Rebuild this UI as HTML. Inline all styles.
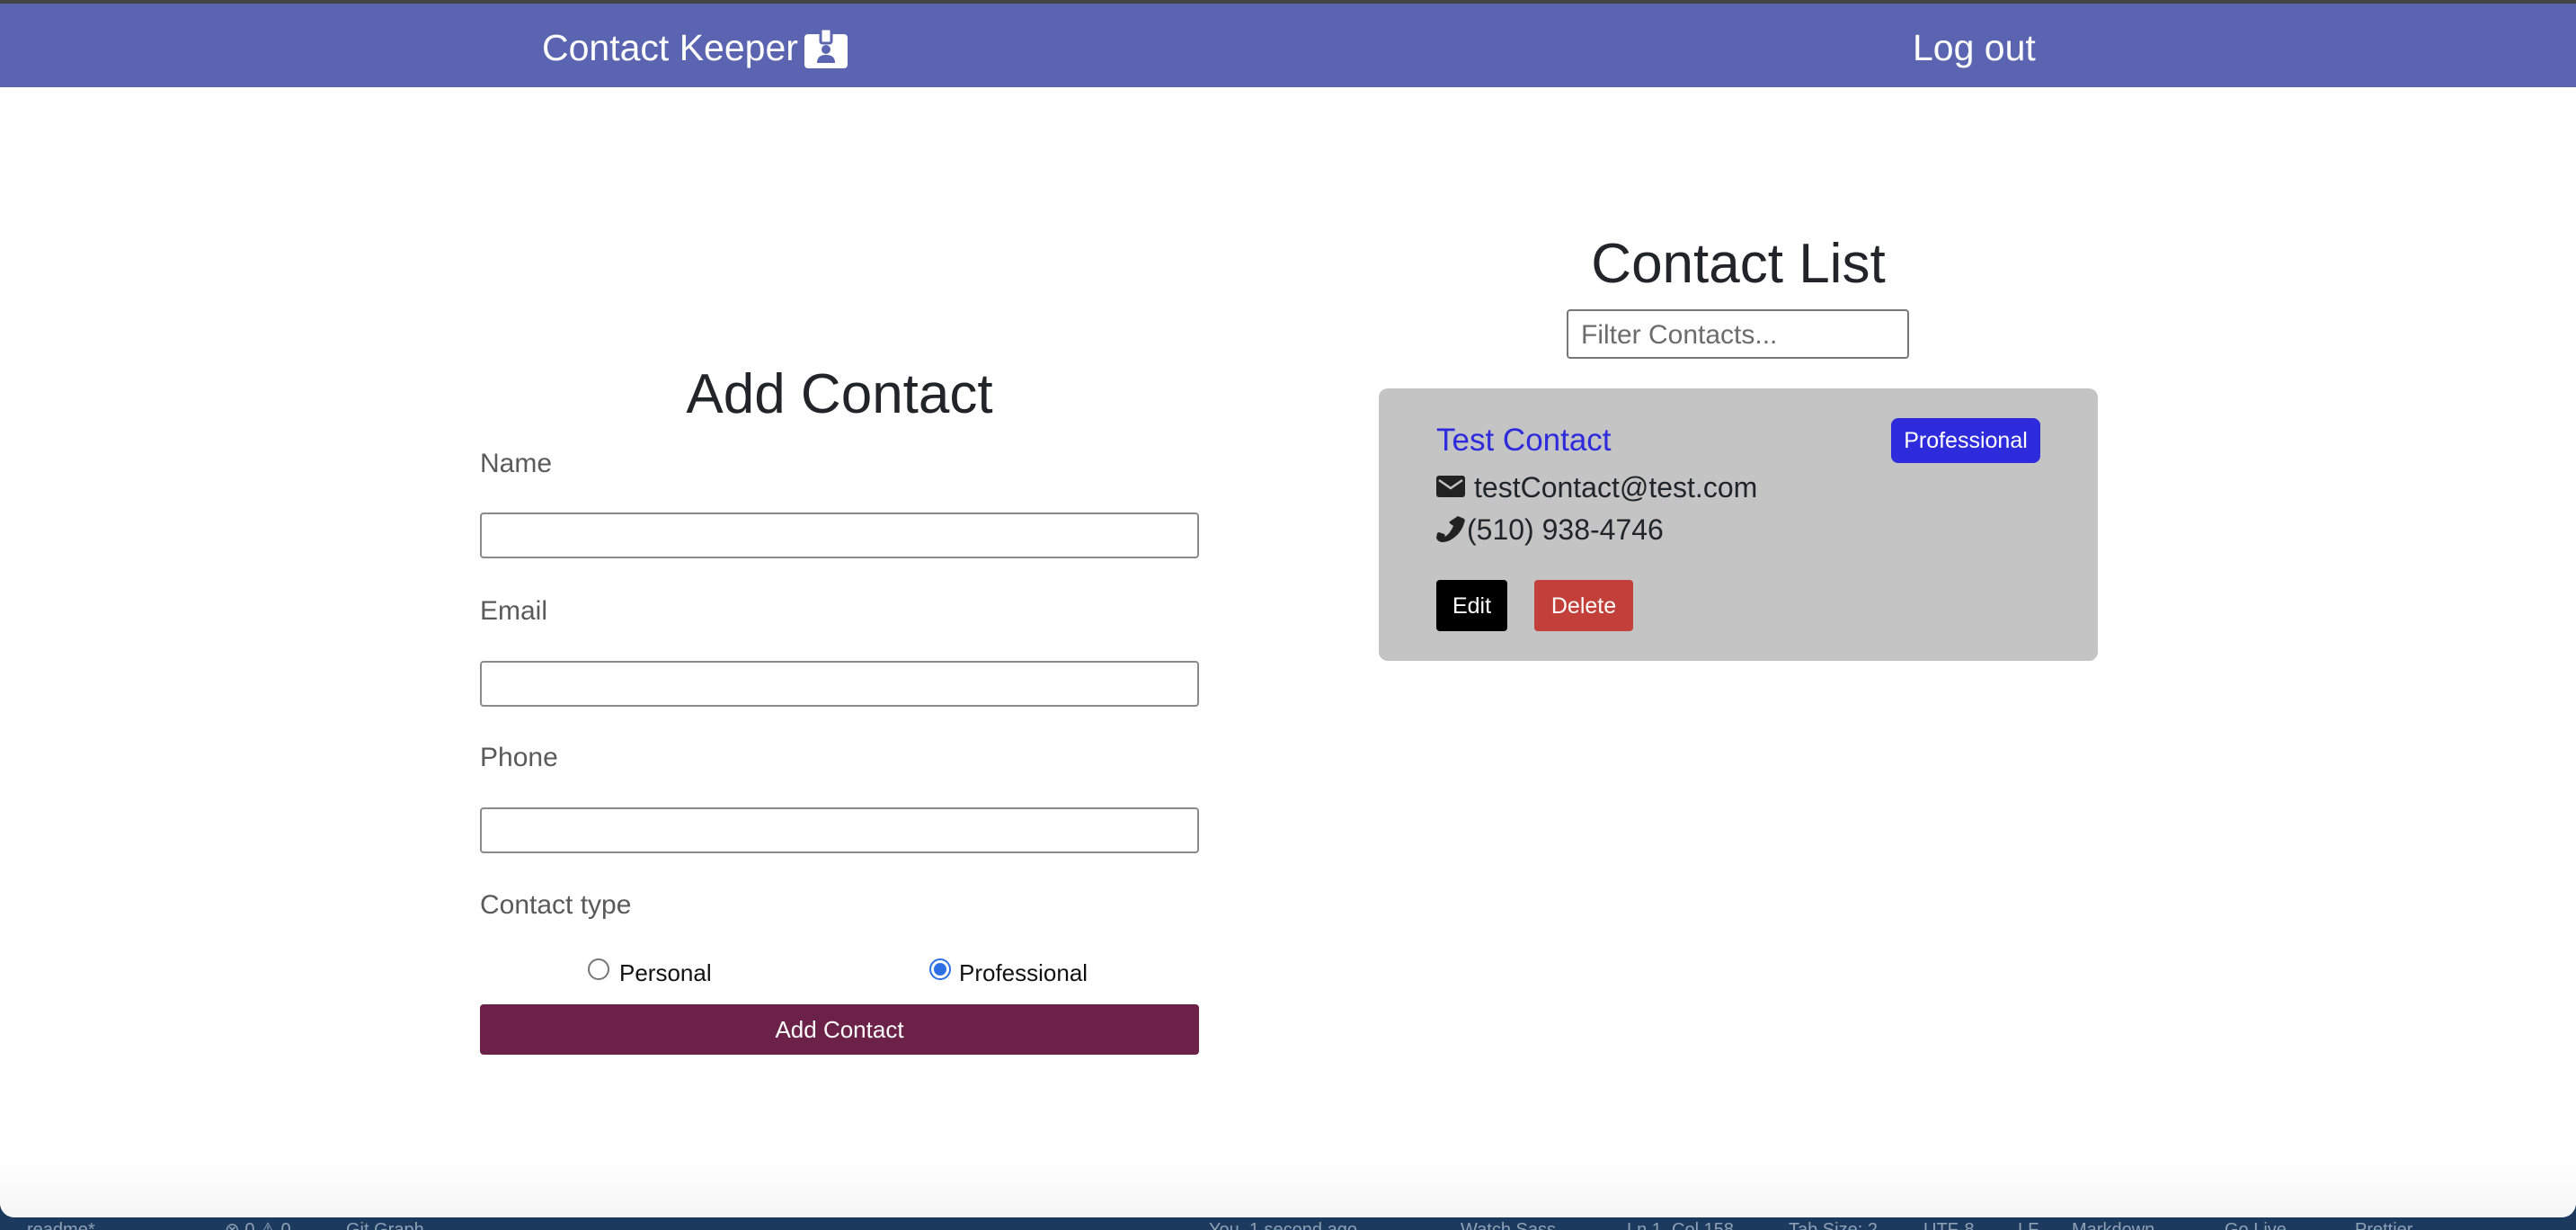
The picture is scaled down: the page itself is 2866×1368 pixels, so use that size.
<!DOCTYPE html>
<html><head><meta charset="utf-8"><style>
*{margin:0;padding:0;box-sizing:border-box}
body{width:2866px;height:1368px;overflow:hidden;background:#1b3a5e;font-family:"Liberation Sans",sans-serif;position:relative}
.win{position:absolute;left:0;top:0;width:2866px;height:1354px;background:#fff;border-radius:0 0 16px 16px;overflow:hidden}
.topline{position:absolute;left:0;top:0;width:100%;height:4px;background:#444}
.hdr{position:absolute;left:0;top:4px;width:100%;height:93px;background:#5a64b1;color:#fff}
.a{position:absolute;white-space:nowrap}
.lbl{font-size:30px;color:#5a5a5a}
.inp{position:absolute;left:534px;width:800px;height:51px;border:2px solid #8a8a8a;border-radius:4px;background:#fff}
.h{font-size:62px;color:#212529}
.radio{position:absolute;width:24px;height:24px;border-radius:50%;border:2px solid #767676;background:#fff}
</style></head><body>
<div class="win">
<div class="topline"></div>
<div class="hdr">
 <div class="a" style="left:603px;top:26px;font-size:41px">Contact Keeper</div>
 <svg class="a" style="left:895px;top:28px" width="48" height="44" viewBox="0 0 48 44">
  <rect x="0" y="6" width="48" height="38" rx="4" fill="#fff"/>
  <rect x="18" y="0" width="12" height="16" rx="2" fill="#fff" stroke="#5a64b1" stroke-width="3"/>
  <circle cx="24" cy="23" r="5" fill="#5a64b1"/>
  <path d="M14 38 q0-9 10-9 q10 0 10 9z" fill="#5a64b1"/>
 </svg>
 <div class="a" style="left:2128px;top:26px;font-size:41px">Log out</div>
</div>

<div class="a h" style="left:534px;width:800px;text-align:center;top:403px">Add Contact</div>
<div class="a lbl" style="left:534px;top:499px">Name</div>
<div class="inp" style="top:570px"></div>
<div class="a lbl" style="left:534px;top:663px">Email</div>
<div class="inp" style="top:735px"></div>
<div class="a lbl" style="left:534px;top:826px">Phone</div>
<div class="inp" style="top:898px"></div>
<div class="a lbl" style="left:534px;top:990px">Contact type</div>
<div class="radio" style="left:654px;top:1066px"></div>
<div class="a" style="left:689px;top:1067px;font-size:26px;color:#111">Personal</div>
<div class="radio" style="left:1034px;top:1066px;border-color:#2f6fe4"><div style="position:absolute;left:3px;top:3px;width:14px;height:14px;border-radius:50%;background:#2f6fe4"></div></div>
<div class="a" style="left:1067px;top:1067px;font-size:26px;color:#111">Professional</div>
<div class="a" style="left:534px;top:1117px;width:800px;height:56px;background:#6b2148;border-radius:4px;color:#fff;font-size:26px;text-align:center;line-height:56px">Add Contact</div>

<div class="a h" style="left:1534px;width:800px;text-align:center;top:258px">Contact List</div>
<div class="a" style="left:1743px;top:344px;width:381px;height:55px;border:2px solid #777;border-radius:4px;font-size:30px;color:#6c6c6c;padding-left:14px;line-height:53px">Filter Contacts...</div>

<div class="a" style="left:1534px;top:432px;width:800px;height:303px;background:#c4c4c4;border-radius:10px">
 <div class="a" style="left:64px;top:38px;font-size:35px;color:#2d2bdb">Test Contact</div>
 <div class="a" style="left:570px;top:33px;width:166px;height:50px;background:#2d2bdb;border-radius:8px;color:#fff;font-size:25px;text-align:center;line-height:51px">Professional</div>
 <svg class="a" style="left:64px;top:97px" width="32" height="24" viewBox="0 0 32 24"><rect x="0" y="0" width="32" height="24" rx="3" fill="#222"/><path d="M3 5 L16 14 L29 5" stroke="#c4c4c4" stroke-width="2.5" fill="none"/></svg>
 <div class="a" style="left:106px;top:92px;font-size:32px;color:#212529">testContact@test.com</div>
 <svg class="a" style="left:64px;top:142px" width="32" height="29" viewBox="0 0 32 29"><path d="M24 0 L31 3 Q32 4 31.5 6 Q28 20 15 27 Q11 29 6 29 Q1 28 0 24 L1 19 Q2 18 3 18 L9 20 Q10 21 9.5 23 Q15 20 19 11 L15 8 Q14 7 15 6 Z" fill="#222"/></svg>
 <div class="a" style="left:98px;top:139px;font-size:32px;color:#212529">(510) 938-4746</div>
 <div class="a" style="left:64px;top:213px;width:79px;height:57px;background:#000;border-radius:4px;color:#fff;font-size:25px;text-align:center;line-height:58px">Edit</div>
 <div class="a" style="left:173px;top:213px;width:110px;height:57px;background:#c33f39;border-radius:4px;color:#fff;font-size:25px;text-align:center;line-height:58px">Delete</div>
</div>
<div class="a" style="left:0;top:1290px;width:2866px;height:64px;background:linear-gradient(#fff,#f6f6f6)"></div>
</div>
<div class="a" style="left:0;top:1354px;width:100%;height:14px;font-size:20px;color:#8ea0b5;overflow:hidden;line-height:28px">
 <span class="a" style="left:30px;top:0">readme*</span>
 <span class="a" style="left:250px;top:0">⊗ 0 ⚠ 0</span>
 <span class="a" style="left:385px;top:0">Git Graph</span>
 <span class="a" style="left:1345px;top:0">You, 1 second ago</span>
 <span class="a" style="left:1625px;top:0">Watch Sass</span>
 <span class="a" style="left:1810px;top:0">Ln 1, Col 158</span>
 <span class="a" style="left:1990px;top:0">Tab Size: 2</span>
 <span class="a" style="left:2140px;top:0">UTF-8</span>
 <span class="a" style="left:2245px;top:0">LF</span>
 <span class="a" style="left:2305px;top:0">Markdown</span>
 <span class="a" style="left:2475px;top:0">Go Live</span>
 <span class="a" style="left:2620px;top:0">Prettier</span>
</div>
</body></html>
